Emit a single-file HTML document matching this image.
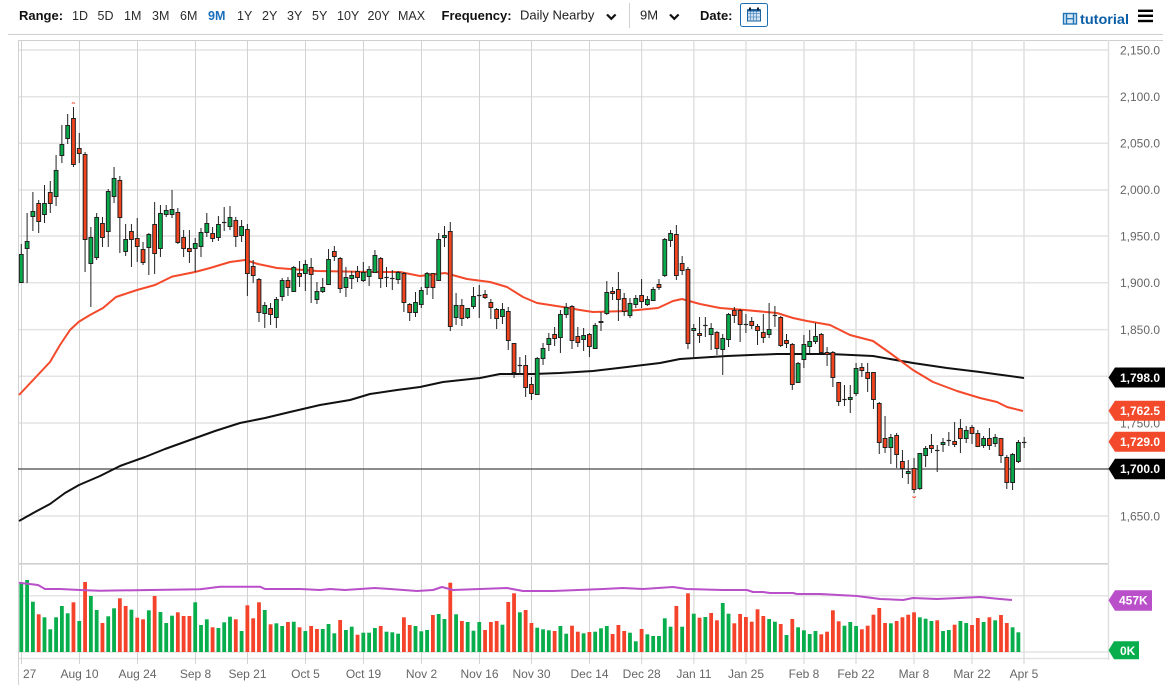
<!DOCTYPE html>
<html><head><meta charset="utf-8"><title>Chart</title>
<style>
html,body{margin:0;padding:0;background:#fff;width:1170px;height:694px;overflow:hidden}
svg{display:block;font-family:"Liberation Sans",sans-serif}
.b{font-weight:bold;font-size:13px;fill:#111}
.r{font-size:12.5px;fill:#2b2b2b}
.ax{font-size:12px;fill:#666}
.tl{font-size:12px;fill:#666;text-anchor:middle}
.tag{font-size:12px;font-weight:bold;fill:#fff}
</style></head><body>
<svg id="s" width="1170" height="694" viewBox="0 0 1170 694" xmlns="http://www.w3.org/2000/svg">
<rect width="1170" height="694" fill="#fff"/>
<!-- toolbar -->
<text class="b" x="19" y="20">Range:</text>
<text class="r" x="72" y="20">1D</text><text class="r" x="97.5" y="20">5D</text><text class="r" x="124" y="20">1M</text><text class="r" x="152" y="20">3M</text><text class="r" x="180" y="20">6M</text>
<text class="r" x="208" y="20" style="font-weight:bold;fill:#1a6fbd">9M</text>
<text class="r" x="237" y="20">1Y</text><text class="r" x="262" y="20">2Y</text><text class="r" x="287" y="20">3Y</text><text class="r" x="312" y="20">5Y</text><text class="r" x="337" y="20">10Y</text><text class="r" x="367.5" y="20">20Y</text><text class="r" x="398" y="20">MAX</text>
<text class="b" x="441.5" y="20">Frequency:</text>
<text x="520" y="19.5" style="font-size:13px;fill:#222">Daily Nearby</text>
<path d="M607,14.5l4.3,4.3l4.3,-4.3" fill="none" stroke="#111" stroke-width="2.2"/>
<rect x="629" y="3" width="1" height="25" fill="#d0d0d0"/>
<text x="640" y="19.5" style="font-size:13px;fill:#222">9M</text>
<path d="M670,14.5l4.3,4.3l4.3,-4.3" fill="none" stroke="#111" stroke-width="2.2"/>
<text class="b" x="700" y="20">Date:</text>
<rect x="740.5" y="3.5" width="27" height="23" rx="2" fill="#fff" stroke="#1a6fb5"/>
<g>
<rect x="747.5" y="10" width="13" height="11" fill="#cfe3f4" stroke="#1a5f9e"/>
<path d="M750.5,10v11M753.5,10v11M756.5,10v11M747.5,13.5h13M747.5,17h13" stroke="#5a8fc0" stroke-width=".8" fill="none"/>
<rect x="747.5" y="9" width="13" height="2.5" fill="#1a5f9e"/>
<rect x="749" y="7.5" width="2" height="3" fill="#123"/><rect x="757" y="7.5" width="2" height="3" fill="#123"/>
</g>
<g fill="#d8e8f5" stroke="#2274b8" stroke-width="1.4">
<rect x="1063.5" y="13.5" width="13" height="10.5"/>
<path d="M1066.5,13.5v10.5M1073.5,13.5v10.5M1066.5,18.7h7" fill="none"/>
</g>
<text x="1080" y="24" textLength="49" lengthAdjust="spacingAndGlyphs" style="font-size:14px;font-weight:bold;fill:#0a5ea8">tutorial</text>
<rect x="1138" y="9.6" width="15" height="2.4" fill="#000"/><rect x="1138" y="14.6" width="15" height="2.4" fill="#000"/><rect x="1138" y="19.8" width="15" height="2.4" fill="#000"/>
<rect x="8" y="34" width="1155" height="1" fill="#cfcfcf"/>
<rect x="18" y="40" width="1145" height="1" fill="#cfcfcf"/>
<!-- horizontal grid -->
<g stroke="#e4e4e4" stroke-width="1.5">
<path d="M18,50H1109M18,96.8H1109M18,143.2H1109M18,190H1109M18,236H1109M18,282.8H1109M18,329.6H1109M18,376.2H1109M18,423H1109M18,516H1109M18,595.7H1109M18,652H1109M18,658.5H1109"/>
</g>
<rect x="18" y="563" width="1091" height="1.6" fill="#cfcfcf"/>
<!-- vertical grid -->
<g stroke="#d2d2d2" stroke-width="1">
<path d="M18.5,40V685M21.5,40V664M79.5,40V664M137.5,40V664M195.5,40V664M247.5,40V664M305.5,40V664M363.5,40V664M421.5,40V664M479.5,40V664M531.5,40V664M589.5,40V664M641.7,40V664M693.9,40V664"/>
</g>
<g stroke="#dfdfdf" stroke-width="1.4">
<path d="M746,40V664M804,40V664M856,40V664M914,40V664M972,40V664M1024,40V664M1108.5,40V660"/>
</g>
<rect x="18" y="468.3" width="1091" height="1.4" fill="#5a5a5a"/>
<!-- moving averages -->
<polyline fill="none" stroke="#111" stroke-width="2" stroke-linejoin="round" points="19,521 35,512 50,504 65,493 79,485 100,476 120,466 145,457 165,449 190,440 215,431 240,423 265,418 290,412 320,405 350,400 370,394 397,390 420,387 443,382 480,378 500,374 533,374 560,373 593,371 627,367 660,363 680,359 727,356 777,354 830,354 873,356 913,363 947,368 980,372 1024,378"/>
<polyline fill="none" stroke="#f4492a" stroke-width="2" stroke-linejoin="round" points="19,395 35,378 50,362 60,345 70,330 79,321.6 90,315 103,308 116,297 125,294 137,290 155,285 172,276.6 195,272 210,268 230,262 245,260 258,264 277,268 290,269 317,271 372,272 400,272 420,276 445,273 467,279 490,282 507,287 523,297 537,303 563,307 580,310 593,312 627,311 658,308 673,301 682,299 700,304 720,308 745,310 777,313 793,318 807,321 830,325 850,335 873,341 890,353 913,370 933,382 957,391 980,398 997,402 1007,407 1023,411"/>
<g id="vol"></g>
<g id="cd"></g>
<polyline fill="none" stroke="#b94fc9" stroke-width="2" stroke-linejoin="round" points="19,582.7 38,585 45,589 60,589 80,590 100,590.7 150,590 200,589.3 220,586.7 260,586.7 265,589 300,589 320,590 330,589 345,590 375,588 390,589 417,591 433,590 442,587 453,590 507,588 523,591 553,591 603,589 623,588 643,589 673,587 687,589 723,590 747,590 753,592 763,592 770,593 793,593 797,594 820,594 857,596 880,599 903,600 913,598 937,599 980,597 1000,599 1012,600"/>
<path d="M71.8,103.5q1.7,-1.6 3.2,0" fill="none" stroke="#f4492a" stroke-width="1"/>
<path d="M912.5,496.5q1.7,2 3.4,0" fill="none" stroke="#f4492a" stroke-width="1"/>
<!-- price axis -->
<text class="ax" x="1120" y="54.5">2,150.0</text><text class="ax" x="1120" y="101">2,100.0</text><text class="ax" x="1120" y="147.5">2,050.0</text><text class="ax" x="1120" y="194">2,000.0</text><text class="ax" x="1120" y="240.5">1,950.0</text><text class="ax" x="1120" y="287">1,900.0</text><text class="ax" x="1120" y="334">1,850.0</text><text class="ax" x="1120" y="427.5">1,750.0</text><text class="ax" x="1120" y="520.5">1,650.0</text>
<!-- tags -->
<path d="M1108.5,377.5l6.5,-10H1165v20H1115z" fill="#000"/><text class="tag" x="1120" y="382">1,798.0</text>
<path d="M1108.5,410.7l6.5,-10H1165v20H1115z" fill="#f24a2a"/><text class="tag" x="1120" y="415">1,762.5</text>
<path d="M1108.5,441.7l6.5,-10H1165v20H1115z" fill="#f24a2a"/><text class="tag" x="1120" y="446">1,729.0</text>
<path d="M1108.5,468.7l6.5,-10H1165v20.5H1115z" fill="#000"/><text class="tag" x="1120" y="473">1,700.0</text>
<path d="M1108.5,600.3l6.5,-10H1152v20.5H1115z" fill="#b94fc9"/><text class="tag" x="1119" y="604.5">457K</text>
<path d="M1108.5,650.3l5.5,-9H1139v18H1114z" fill="#08ad4c"/><text class="tag" x="1120" y="655">0K</text>
<!-- time axis -->
<text class="ax" x="23" y="678">27</text>
<text class="tl" x="79.5" y="678">Aug 10</text><text class="tl" x="137.5" y="678">Aug 24</text><text class="tl" x="195.5" y="678">Sep 8</text><text class="tl" x="247.5" y="678">Sep 21</text><text class="tl" x="305.5" y="678">Oct 5</text><text class="tl" x="363.5" y="678">Oct 19</text><text class="tl" x="421.5" y="678">Nov 2</text><text class="tl" x="479.5" y="678">Nov 16</text><text class="tl" x="531.5" y="678">Nov 30</text><text class="tl" x="589.5" y="678">Dec 14</text><text class="tl" x="641.7" y="678">Dec 28</text><text class="tl" x="693.9" y="678">Jan 11</text><text class="tl" x="746" y="678">Jan 25</text><text class="tl" x="804" y="678">Feb 8</text><text class="tl" x="856" y="678">Feb 22</text><text class="tl" x="914" y="678">Mar 8</text><text class="tl" x="972" y="678">Mar 22</text><text class="tl" x="1024" y="678">Apr 5</text>
</svg>
<script>
var C="g254,282,244,283 g241,248,213,283 g211,216,192,231 r203,221,200,233 g203,214,185,223 r192,203,181,213 g170,196,155,206 g144,155,125,163 g125,138,114,144 r118,164,107,167 r148,153,133,163 r154,239,152,272 g237,263,227,307 g217,257,213,260 r223,237,217,247 g191,231,189,247 g178,196,167,203 r180,217,176,253 g239,251,224,256 r231,239,224,267 r238,246,218,262 r249,262,242,265 g234,247,233,275 r224,253,202,274 g213,248,205,257 g210,214,205,217 g209,214,190,218 r212,242,208,244 r237,248,230,257 r248,251,230,263 g243,248,238,272 g232,246,228,257 g223,232,213,237 r233,238,227,242 g224,237,216,241 d222,222,207,231 g217,226,206,230 r220,236,217,247 g226,235,220,242 r229,273,224,296 r266,275,260,283 r279,312,278,322 g305,313,302,328 r308,314,303,325 g299,317,297,328 g280,296,278,301 r280,287,277,296 g267,291,266,292 r273,276,261,287 g264,273,260,291 r267,274,258,303 g291,299,282,304 g287,291,278,293 g259,284,249,285 r251,256,246,261 r258,288,257,293 g277,287,267,297 g275,278,271,289 r271,277,266,282 g272,280,262,282 g269,276,266,286 g255,272,250,273 r258,278,257,288 d277,277,267,287 d278,278,270,290 g272,279,271,284 r273,302,272,312 r304,312,303,321 g302,312,292,317 g290,304,287,308 g273,287,272,295 r273,287,273,299 g239,280,233,281 g235,237,226,247 r231,326,222,331 g305,317,293,325 r305,318,299,326 g308,317,308,319 g296,306,287,309 d295,295,285,318 r294,297,290,299 r302,307,299,319 r309,318,308,329 g309,316,303,324 r311,340,307,350 r343,372,343,378 d365,365,357,375 r365,387,355,397 r384,393,377,400 g358,394,357,395 g348,358,343,365 g338,344,333,351 r334,338,327,346 g314,337,310,353 g307,314,303,318 r306,340,305,349 r336,342,327,347 g335,339,328,351 r334,346,333,357 g325,348,323,349 g321,322,312,331 g292,313,281,315 r291,293,287,300 r289,299,272,321 r298,311,293,316 g303,315,298,318 g298,304,295,308 r295,301,279,308 g299,304,296,306 g289,300,287,301 r284,287,279,290 g239,275,238,277 g233,240,230,247 r234,275,225,280 r263,270,256,275 r269,343,267,349 g328,330,324,359 r333,335,317,343 d325,325,317,337 g328,334,323,350 r332,348,331,355 g338,349,334,375 g314,339,313,347 r310,315,307,323 r310,324,309,342 d324,324,314,333 r321,325,317,329 r326,330,324,345 r332,337,314,343 g329,334,303,338 d315,315,306,327 r317,345,316,347 r340,343,334,348 r344,384,343,390 g363,382,362,382 g344,359,335,368 g341,346,330,353 g336,341,323,344 r334,352,333,353 r352,354,347,366 r352,377,351,387 r382,401,382,406 d399,399,385,406 g397,399,385,413 g368,393,363,396 r367,370,363,377 r372,378,363,392 r372,399,372,409 r403,442,402,454 r438,447,416,453 g437,447,434,464 r435,454,433,468 r461,468,450,478 g471,473,460,484 r468,489,458,493 g453,488,453,490 g448,455,446,467 r445,448,434,453 d450,450,445,472 g442,444,438,452 d440,440,432,446 r441,444,422,447 r428,438,419,453 g430,438,426,443 r427,433,425,444 r433,446,430,447 g438,445,436,448 r438,445,428,450 g437,443,434,447 r438,455,438,463 r457,482,455,489 g454,482,453,490 g442,461,440,463 d442,442,437,448".split(" ");
var V="g70 g60 g125 r163 g172 g208 g172 g138 g160 r127 g183 r66 g108 g150 r189 g169 g145 r115 r138 g149 r173 r178 g151 r108 g156 g189 g167 r157 r168 r168 g127 g195 g178 r202 g204 g187 g170 r178 g213 r136 r175 r127 g150 r193 g190 g198 r186 g185 r202 g213 r198 r207 g207 g192 g220 r180 g210 g200 r224 g218 g218 g204 r198 g215 g217 g221 r172 r195 g198 g214 g210 r165 g162 g177 r68 g163 r183 g186 g212 g186 r210 r186 r183 g194 r126 r100 g157 r150 r189 g203 g208 g211 r213 g198 g221 r197 r215 g220 r216 g215 g205 g198 r222 r195 r213 g218 g244 r207 g223 g228 g228 g175 g200 r138 g200 r100 g161 r173 g171 r159 r181 g129 g161 r190 r162 r171 r185 r148 r168 g177 g185 r192 g225 r177 g202 g211 g222 g213 r223 r215 r151 r184 g197 g186 g198 r208 r197 r164 r144 r189 g190 r183 r172 r164 r157 g172 g176 g183 r181 g213 g210 r194 g183 g189 r195 r174 g186 r172 g181 r165 r189 g202 g217".split(" ");
var G="#08a94a",R="#f2431f",h="",i,p,x,c;
for(i=0;i<C.length;i++){c=C[i].charAt(0);p=C[i].slice(1).split(",").map(Number);x=21.3+5.797*i;
h+='<path d="M'+x.toFixed(2)+','+p[2]+'V'+p[3]+'" stroke="#222" stroke-width="1"/>';
if(c=="d"){h+='<path d="M'+(x-2.2).toFixed(2)+','+p[0]+'.5h4.4" stroke="#222" stroke-width="1.2"/>';}
else{h+='<rect x="'+(x-1.9).toFixed(2)+'" y="'+(p[0]+.5)+'" width="3.8" height="'+Math.max(p[1]-p[0],1)+'" fill="'+(c=="g"?G:R)+'" stroke="#222" stroke-width="1"/>';}
}
document.getElementById("cd").innerHTML=h;
h="";
for(i=0;i<V.length;i++){c=V[i].charAt(0);p=560+parseInt(V[i].slice(1))/3;x=21.3+5.797*i;
h+='<rect x="'+(x-1.9).toFixed(2)+'" y="'+p.toFixed(1)+'" width="3.8" height="'+(652-p).toFixed(1)+'" fill="'+(c=="g"?"#08ad4c":"#f4432a")+'"/>';
}
document.getElementById("vol").innerHTML=h;
</script>
</body></html>
